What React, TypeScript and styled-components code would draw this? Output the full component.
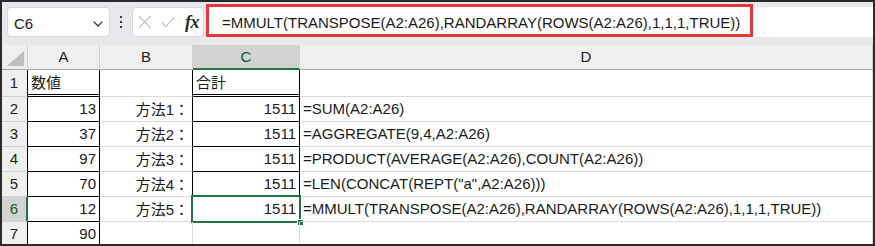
import React from "react";
import styled, { createGlobalStyle, css } from "styled-components";

const Global = createGlobalStyle`
  html, body { margin: 0; padding: 0; background: #ffffff; }
  body { font-family: "Liberation Sans", "Noto Sans CJK JP", sans-serif; }
`;

const FONT = `"Liberation Sans", "Noto Sans CJK JP", sans-serif`;
const GREEN = "#217346";
const GRID = "#dadada";

const Frame = styled.div`
  width: 875px;
  height: 246px;
  box-sizing: border-box;
  border: 2px solid #2a2a2a;
  overflow: hidden;
  background: #ffffff;
  display: flex;
  flex-direction: column;
  font-family: ${FONT};
  color: #1a1a1a;
`;

const Toolbar = styled.div`
  height: 43px;
  flex: none;
  box-sizing: border-box;
  background: #e7e7ec;
  display: flex;
  align-items: flex-start;
  padding: 5px 0 0 5px;
`;

const NameBox = styled.div`
  width: 103px;
  height: 30px;
  box-sizing: border-box;
  background: #ffffff;
  border: 1px solid #d6d6db;
  border-radius: 4px;
  display: flex;
  align-items: center;
  justify-content: space-between;
  padding: 3px 6px 0 6px;
  font-size: 15px;
  color: #1a1a1a;
`;

const Dots = styled.div`
  width: 22px;
  height: 30px;
  display: flex;
  flex-direction: column;
  align-items: center;
  justify-content: center;
  gap: 3px;
`;

const Dot = styled.span`
  width: 2px;
  height: 2px;
  background: #3a3a3a;
`;

const FuncBox = styled.div`
  width: 72px;
  height: 30px;
  box-sizing: border-box;
  background: #ffffff;
  border: 1px solid #d6d6db;
  border-radius: 4px;
  display: flex;
  align-items: center;
  padding: 0 4px 0 5px;
  gap: 9px;
`;

const Fx = styled.span`
  font-family: "Liberation Serif", "DejaVu Serif", serif;
  font-style: italic;
  font-weight: 600;
  font-size: 18px;
  color: #2a2a2a;
  margin-left: 1px;
  letter-spacing: -0.5px;
`;

const FormulaField = styled.div`
  flex: 1;
  height: 30px;
  margin-left: 2px;
  background: #ffffff;
  position: relative;
  display: flex;
  align-items: center;
  padding-left: 16px;
  padding-top: 1px;
  box-sizing: border-box;
  font-size: 15px;
  white-space: nowrap;
  color: #1a1a1a;
`;

const Highlight = styled.div`
  position: absolute;
  top: -3px;
  left: 0;
  width: 547px;
  height: 33px;
  box-sizing: border-box;
  border: 3px solid #e3393d;
  pointer-events: none;
`;

const Sheet = styled.div`
  display: grid;
  grid-template-columns: 26px 72px 93px 107px 1fr;
  grid-template-rows: 25px 27px repeat(5, 25px) 25px;
  flex: none;
`;

const Corner = styled.div`
  box-sizing: border-box;
  background: #efefef;
  border-right: 1px solid #cfcfcf;
  border-bottom: 1px solid #a8a8a8;
  position: relative;
`;

const CornerTriangle = styled.span`
  position: absolute;
  right: 3px;
  bottom: 3px;
  width: 17px;
  height: 15px;
  background: #bdbdbd;
  clip-path: polygon(100% 0, 100% 100%, 0 100%);
`;

const ColHead = styled.div<{ $selected?: boolean }>`
  box-sizing: border-box;
  background: ${(p) => (p.$selected ? "#d3d3d3" : "#efefef")};
  border-right: 1px solid #cfcfcf;
  border-bottom: ${(p) => (p.$selected ? `2px solid ${GREEN}` : "1px solid #a8a8a8")};
  display: flex;
  align-items: center;
  justify-content: center;
  font-size: 15px;
  padding-bottom: ${(p) => (p.$selected ? "0" : "1px")};
  color: ${(p) => (p.$selected ? "#0f5a30" : "#222")};
`;

const RowHead = styled.div<{ $selected?: boolean }>`
  box-sizing: border-box;
  background: ${(p) => (p.$selected ? "#d3d3d3" : "#efefef")};
  border-right: ${(p) => (p.$selected ? `2px solid ${GREEN}` : "1px solid #000")};
  border-bottom: 1px solid #d0d0d0;
  display: flex;
  align-items: center;
  justify-content: center;
  font-size: 15px;
  padding-right: ${(p) => (p.$selected ? "0" : "1px")};
  padding-bottom: 1px;
  color: ${(p) => (p.$selected ? "#0f5a30" : "#222")};
`;

type CellProps = {
  $align?: "left" | "right";
  $right?: "black" | "grid";
  $bottom?: "black" | "double" | "grid";
};

const Cell = styled.div<CellProps>`
  box-sizing: border-box;
  position: relative;
  display: flex;
  align-items: center;
  justify-content: ${(p) => (p.$align === "right" ? "flex-end" : "flex-start")};
  padding: 0 3px 2px 3px;
  font-size: 15px;
  white-space: nowrap;
  color: #1a1a1a;
  border-right: 1px solid ${(p) => (p.$right === "black" ? "#000" : GRID)};
  ${(p) =>
    p.$bottom === "double"
      ? css`border-bottom: 3px double #000;`
      : css`border-bottom: 1px solid ${p.$bottom === "black" ? "#000" : GRID};`}
`;

const Selection = styled.div`
  position: absolute;
  inset: -2px;
  border: 2px solid ${GREEN};
  pointer-events: none;
`;

const FillHandle = styled.span`
  position: absolute;
  right: -5px;
  bottom: -5px;
  width: 5px;
  height: 5px;
  background: ${GREEN};
  border: 1px solid #ffffff;
`;

const ChevronDown = () => (
  <svg width="10" height="6" viewBox="0 0 10 6" fill="none">
    <polyline points="0.6,0.6 5,5 9.4,0.6" stroke="#333" strokeWidth="1.3" />
  </svg>
);

const CrossIcon = () => (
  <svg width="14" height="14" viewBox="0 0 14 14" fill="none">
    <line x1="1" y1="1" x2="13" y2="13" stroke="#c4c4c8" strokeWidth="1.3" />
    <line x1="13" y1="1" x2="1" y2="13" stroke="#c4c4c8" strokeWidth="1.3" />
  </svg>
);

const CheckIcon = () => (
  <svg width="15" height="12" viewBox="0 0 15 12" fill="none">
    <polyline points="0.8,6.5 5,10.8 14.2,0.8" stroke="#c4c4c8" strokeWidth="1.3" />
  </svg>
);

const FORMULA = "=MMULT(TRANSPOSE(A2:A26),RANDARRAY(ROWS(A2:A26),1,1,1,TRUE))";

type Row = { a: string; b: string; c: string; d: string };

const rows: Row[] = [
  { a: "数値", b: "", c: "合計", d: "" },
  { a: "13", b: "方法1：", c: "1511", d: "=SUM(A2:A26)" },
  { a: "37", b: "方法2：", c: "1511", d: "=AGGREGATE(9,4,A2:A26)" },
  { a: "97", b: "方法3：", c: "1511", d: "=PRODUCT(AVERAGE(A2:A26),COUNT(A2:A26))" },
  { a: "70", b: "方法4：", c: "1511", d: '=LEN(CONCAT(REPT("a",A2:A26)))' },
  { a: "12", b: "方法5：", c: "1511", d: FORMULA },
  { a: "90", b: "", c: "", d: "" },
];

export default function App() {
  return (
    <>
      <Global />
      <Frame>
        <Toolbar>
          <NameBox>
            <span>C6</span>
            <ChevronDown />
          </NameBox>
          <Dots>
            <Dot />
            <Dot />
            <Dot />
          </Dots>
          <FuncBox>
            <CrossIcon />
            <CheckIcon />
            <Fx>fx</Fx>
          </FuncBox>
          <FormulaField>
            {FORMULA}
            <Highlight />
          </FormulaField>
        </Toolbar>
        <Sheet>
          <Corner>
            <CornerTriangle />
          </Corner>
          <ColHead>A</ColHead>
          <ColHead>B</ColHead>
          <ColHead $selected>C</ColHead>
          <ColHead>D</ColHead>
          {rows.map((r, i) => {
            const n = i + 1;
            const isHeaderRow = n === 1;
            const cBordered = n <= 6;
            const bottomA = isHeaderRow ? "double" : "black";
            const bottomC = isHeaderRow ? "double" : cBordered ? "black" : "grid";
            return (
              <React.Fragment key={n}>
                <RowHead $selected={n === 6}>{n}</RowHead>
                <Cell $align={isHeaderRow ? "left" : "right"} $right="black" $bottom={bottomA}>
                  {r.a}
                </Cell>
                <Cell $align="right" $right={cBordered ? "black" : "grid"} $bottom="grid">
                  {r.b}
                </Cell>
                <Cell
                  $align={isHeaderRow ? "left" : "right"}
                  $right={cBordered ? "black" : "grid"}
                  $bottom={bottomC}
                >
                  {r.c}
                  {n === 6 && (
                    <Selection>
                      <FillHandle />
                    </Selection>
                  )}
                </Cell>
                <Cell $align="left" $bottom="grid">
                  {r.d}
                </Cell>
              </React.Fragment>
            );
          })}
        </Sheet>
      </Frame>
    </>
  );
}
